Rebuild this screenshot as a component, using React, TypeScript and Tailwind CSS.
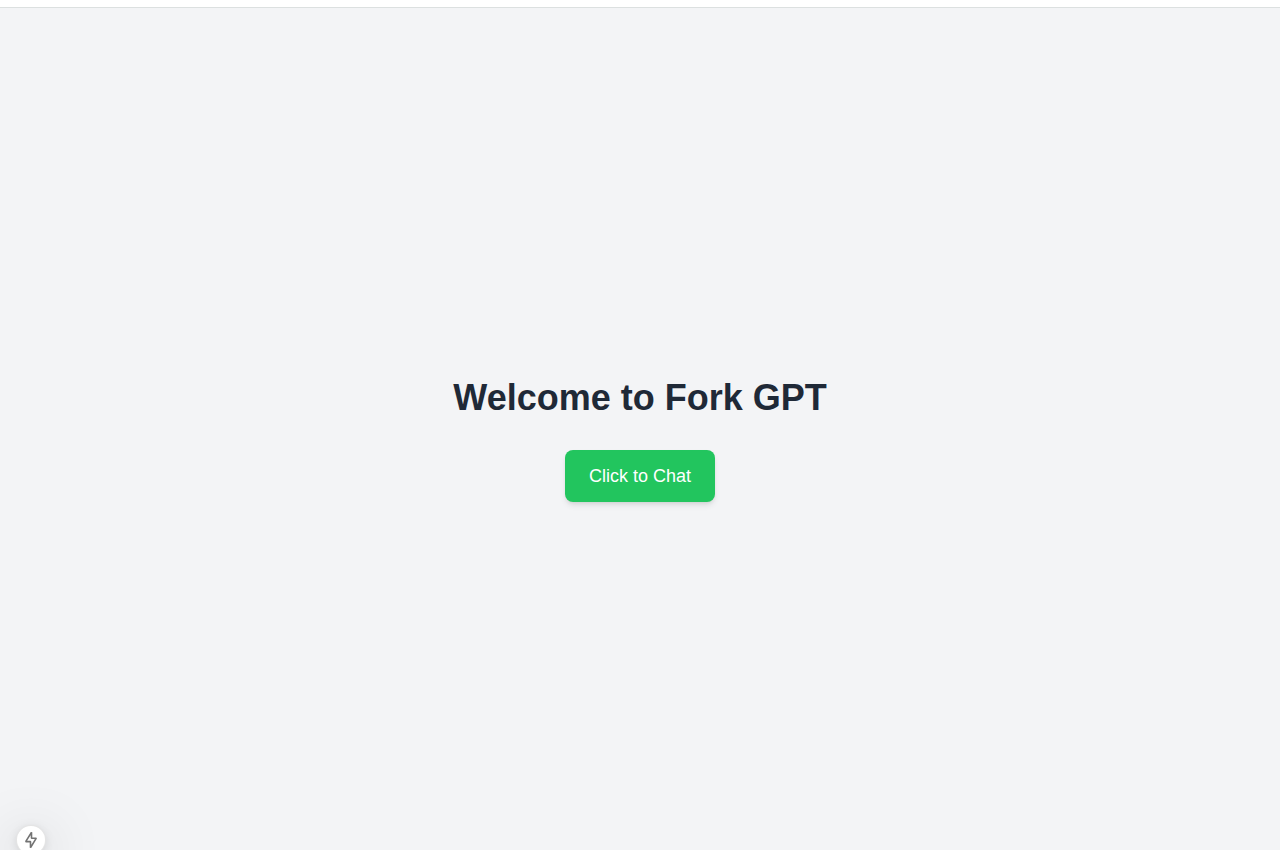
export default function App() {
  return (
    <div className="relative flex min-h-screen flex-col overflow-hidden bg-gray-100 font-['Liberation_Sans',Arial,sans-serif]">
      <header className="h-2 border-b border-[#dce0e0] bg-white" />
      <main className="flex flex-1 flex-col items-center justify-center pt-[22px]">
        <h1 className="mb-8 text-4xl font-bold text-[#1f2937]">Welcome to Fork GPT</h1>
        <button
          type="button"
          className="rounded-lg bg-[#22c55e] px-6 py-3 text-lg text-white shadow-md"
        >
          Click to Chat
        </button>
      </main>
      <button
        type="button"
        aria-label="Show static indicator"
        className="absolute -bottom-[5px] left-4 flex size-[30px] items-center justify-center rounded-full border border-black/10 bg-white text-[#737373] shadow-[0_11px_56px_0_rgba(0,0,0,0.25),0_2px_10px_0_rgba(0,0,0,0.1)]"
      >
        <svg width="16" height="16" viewBox="0 0 16 16" fill="none" aria-hidden="true">
          <path
            d="M8.5 0.3V6.2H13.3L7.5 15.7V9.6H2.7L8.5 0.3Z"
            stroke="currentColor"
            strokeWidth="1.6"
            strokeLinejoin="bevel"
          />
        </svg>
      </button>
    </div>
  );
}
